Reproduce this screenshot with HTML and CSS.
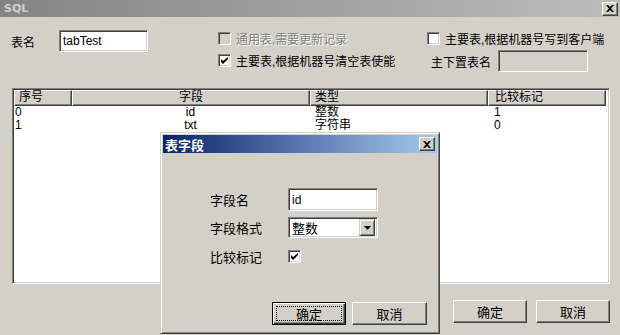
FILE: index.html
```html
<!DOCTYPE html>
<html>
<head>
<meta charset="utf-8">
<link rel="stylesheet" href="styles.css">
</head>
<body>
<div class="window">
  <div class="titlebar inactive">
    <span class="title">SQL</span>
    <span class="close-btn"><svg width="8" height="7" viewBox="0 0 8 7"><path d="M0 0h2l2 2 2-2h2L5 3.5 8 7H6L4 5 2 7H0l3-3.5z" fill="#000"/></svg></span>
  </div>

  <div class="top">
    <div class="name-group">
      <span class="lbl-name">表名</span>
      <div class="field name-field">tabTest</div>
    </div>
    <div class="checks">
      <div class="check-row disabled">
        <span class="cb cb-disabled"></span>
        <span class="cb-text">通用表,需要更新记录</span>
      </div>
      <div class="check-row">
        <span class="cb"><svg width="7" height="7" viewBox="0 0 7 7"><path d="M0 2v3l2 2 5-5V0L2 4z" fill="#000"/></svg></span>
        <span class="cb-text">主要表,根据机器号清空表使能</span>
      </div>
    </div>
    <div class="right-col">
      <div class="check-row">
        <span class="cb"></span>
        <span class="cb-text">主要表,根据机器号写到客户端</span>
      </div>
      <div class="sub-row">
        <span class="lbl-sub">主下置表名</span>
        <div class="field field-disabled"></div>
      </div>
    </div>
  </div>

  <div class="list">
    <div class="list-head">
      <div class="hcell c1">序号</div>
      <div class="hcell c2 center">字段</div>
      <div class="hcell c3">类型</div>
      <div class="hcell c4">比较标记</div>
    </div>
    <div class="list-row">
      <div class="cell c1">0</div>
      <div class="cell c2 center">id</div>
      <div class="cell c3">整数</div>
      <div class="cell c4">1</div>
    </div>
    <div class="list-row">
      <div class="cell c1">1</div>
      <div class="cell c2 center">txt</div>
      <div class="cell c3">字符串</div>
      <div class="cell c4">0</div>
    </div>
  </div>

  <div class="buttons">
    <div class="btn">确定</div>
    <div class="btn">取消</div>
  </div>

  <div class="dialog">
    <div class="titlebar active">
      <span class="title">表字段</span>
      <span class="close-btn"><svg width="8" height="7" viewBox="0 0 8 7"><path d="M0 0h2l2 2 2-2h2L5 3.5 8 7H6L4 5 2 7H0l3-3.5z" fill="#000"/></svg></span>
    </div>
    <div class="form">
      <span class="flbl">字段名</span>
      <div class="field dlg-field">id</div>
      <span class="flbl">字段格式</span>
      <div class="field dlg-select">
        <span class="sel-text">整数</span>
        <span class="sel-btn"><svg width="7" height="4" viewBox="0 0 7 4"><path d="M0 0h7L3.5 4z" fill="#000"/></svg></span>
      </div>
      <span class="flbl">比较标记</span>
      <div class="cb-wrap"><span class="cb"><svg width="7" height="7" viewBox="0 0 7 7"><path d="M0 2v3l2 2 5-5V0L2 4z" fill="#000"/></svg></span></div>
    </div>
    <div class="dlg-buttons">
      <div class="btn btn-default"><span class="focus">确定</span></div>
      <div class="btn dlg-btn">取消</div>
    </div>
  </div>
</div>
</body>
</html>
```

FILE: styles.css
```css
* { box-sizing: border-box; }
html, body { margin: 0; padding: 0; }
body {
  font-family: "Liberation Sans", "Noto Sans CJK SC", sans-serif;
  font-size: 12px;
  color: #000;
  background: #d4d0c8;
}
.window {
  position: relative;
  width: 620px;
  height: 335px;
  background: #d4d0c8;
  overflow: hidden;
}
.titlebar {
  display: flex;
  align-items: center;
  justify-content: space-between;
  height: 17px;
  padding: 0 2px 0 4px;
}
.titlebar.inactive {
  background: linear-gradient(to right, #848484, #bcbcbc);
}
.titlebar.inactive .title {
  color: #d4d0c8;
  font-weight: bold;
  font-family: "DejaVu Sans", sans-serif;
  font-size: 11px;
}
.titlebar.active {
  height: 18px;
  padding: 0 2px 0 2px;
  background: linear-gradient(to right, #0a246a, #a6caf0);
}
.titlebar.active .title {
  color: #fff;
  font-weight: bold;
  font-size: 13px;
}
.close-btn {
  width: 16px;
  height: 14px;
  display: flex;
  align-items: center;
  justify-content: center;
  background: #d4d0c8;
  border: 1px solid;
  border-color: #fff #404040 #404040 #fff;
  box-shadow: inset -1px -1px #808080;
}

/* top section */
.top {
  display: flex;
  height: 71px;
  padding: 13px 0 0 11px;
}
.name-group {
  display: flex;
  align-items: center;
  height: 22px;
  width: 137px;
}
.lbl-name { width: 48px; }
.field {
  background: #fff;
  border: 1px solid;
  border-color: #808080 #fff #fff #808080;
  box-shadow: inset 1px 1px #404040, inset -1px -1px #d4d0c8;
  padding: 0 3px;
  display: flex;
  align-items: center;
}
.name-field { width: 89px; height: 22px; }
.field-disabled { width: 90px; height: 22px; background: #d4d0c8; }
.checks {
  margin-left: 70px;
  width: 209px;
  padding-top: 2px;
  display: flex;
  flex-direction: column;
  gap: 9px;
}
.check-row {
  display: flex;
  align-items: center;
  height: 13px;
  gap: 5px;
  white-space: nowrap;
}
.cb {
  width: 13px;
  height: 13px;
  flex: none;
  background: #fff;
  border: 1px solid;
  border-color: #808080 #fff #fff #808080;
  box-shadow: inset 1px 1px #404040, inset -1px -1px #d4d0c8;
  display: flex;
  align-items: center;
  justify-content: center;
}
.cb-disabled { background: #d4d0c8; }
.check-row.disabled .cb-text {
  color: #808080;
  text-shadow: 1px 1px 0 #fff;
}
.right-col {
  padding-top: 2px;
  display: flex;
  flex-direction: column;
}
.sub-row {
  display: flex;
  align-items: center;
  margin-top: 5px;
  padding-left: 4px;
}
.lbl-sub { width: 67px; }

/* list */
.list {
  margin: 0 10px 0 12px;
  height: 196px;
  background: #fff;
  border: 1px solid;
  border-color: #808080 #fff #fff #808080;
  box-shadow: inset 1px 1px #404040, inset -1px -1px #d4d0c8;
  padding: 1px;
}
.list-head, .list-row { display: flex; }
.hcell {
  height: 16px;
  background: #d4d0c8;
  border: 1px solid;
  border-color: #fff #404040 #404040 #fff;
  box-shadow: inset -1px -1px #808080;
  padding: 0 4px;
  line-height: 13px;
  white-space: nowrap;
}
.cell {
  height: 13px;
  line-height: 13px;
  padding: 0 2px 0 1px;
  white-space: nowrap;
}
.c1 { width: 58px; }
.c2 { width: 238px; }
.c3 { width: 178px; }
.c4 { width: 118px; }
.center { text-align: center; }
.list-row .c3 { padding-left: 5px; }
.list-row .c4 { padding-left: 6px; }
.hcell.c3 { padding-left: 4px; }
.hcell.c4 { padding-left: 6px; }

/* buttons */
.buttons {
  display: flex;
  justify-content: flex-end;
  gap: 9px;
  margin-top: 16px;
  padding-right: 10px;
}
.btn {
  width: 74px;
  height: 23px;
  background: #d4d0c8;
  border: 1px solid;
  border-color: #fff #404040 #404040 #fff;
  box-shadow: inset -1px -1px #808080;
  display: flex;
  align-items: center;
  justify-content: center;
  font-size: 13px;
}

/* dialog */
.dialog {
  position: absolute;
  left: 160px;
  top: 132px;
  width: 280px;
  height: 202px;
  background: #d4d0c8;
  border: 1px solid;
  border-color: #d4d0c8 #404040 #404040 #d4d0c8;
  box-shadow: inset 1px 1px #fff, inset -1px -1px #808080;
  padding: 2px;
}
.form {
  display: grid;
  grid-template-columns: 78px 90px;
  grid-template-rows: 23px 21px 13px;
  row-gap: 6px;
  align-items: center;
  margin: 35px 0 0 47px;
}
.form .flbl { font-size: 13px; }
.form > :nth-child(5) { margin-top: 12px; }
.form > :nth-child(6) { margin-top: 12px; }
.dlg-field { height: 23px; }
.dlg-select {
  height: 21px;
  justify-content: space-between;
  padding: 2px 2px 2px 3px;
  font-size: 13px;
}
.sel-btn {
  width: 16px;
  height: 17px;
  background: #d4d0c8;
  border: 1px solid;
  border-color: #d4d0c8 #404040 #404040 #d4d0c8;
  box-shadow: inset 1px 1px #fff, inset -1px -1px #808080;
  display: flex;
  align-items: center;
  justify-content: center;
}
.cb-wrap { display: flex; }
.dlg-buttons {
  display: flex;
  justify-content: flex-end;
  gap: 6px;
  margin-top: 45px;
  padding-right: 10px;
}
.btn-default {
  border: 1px solid #000;
  box-shadow: inset 1px 1px #fff, inset -1px -1px #404040, inset -2px -2px #808080;
  padding: 3px;
}
.focus {
  flex: 1;
  align-self: stretch;
  border: 1px dotted #000;
  display: flex;
  align-items: center;
  justify-content: center;
}
.dlg-btn { width: 75px; }
```
